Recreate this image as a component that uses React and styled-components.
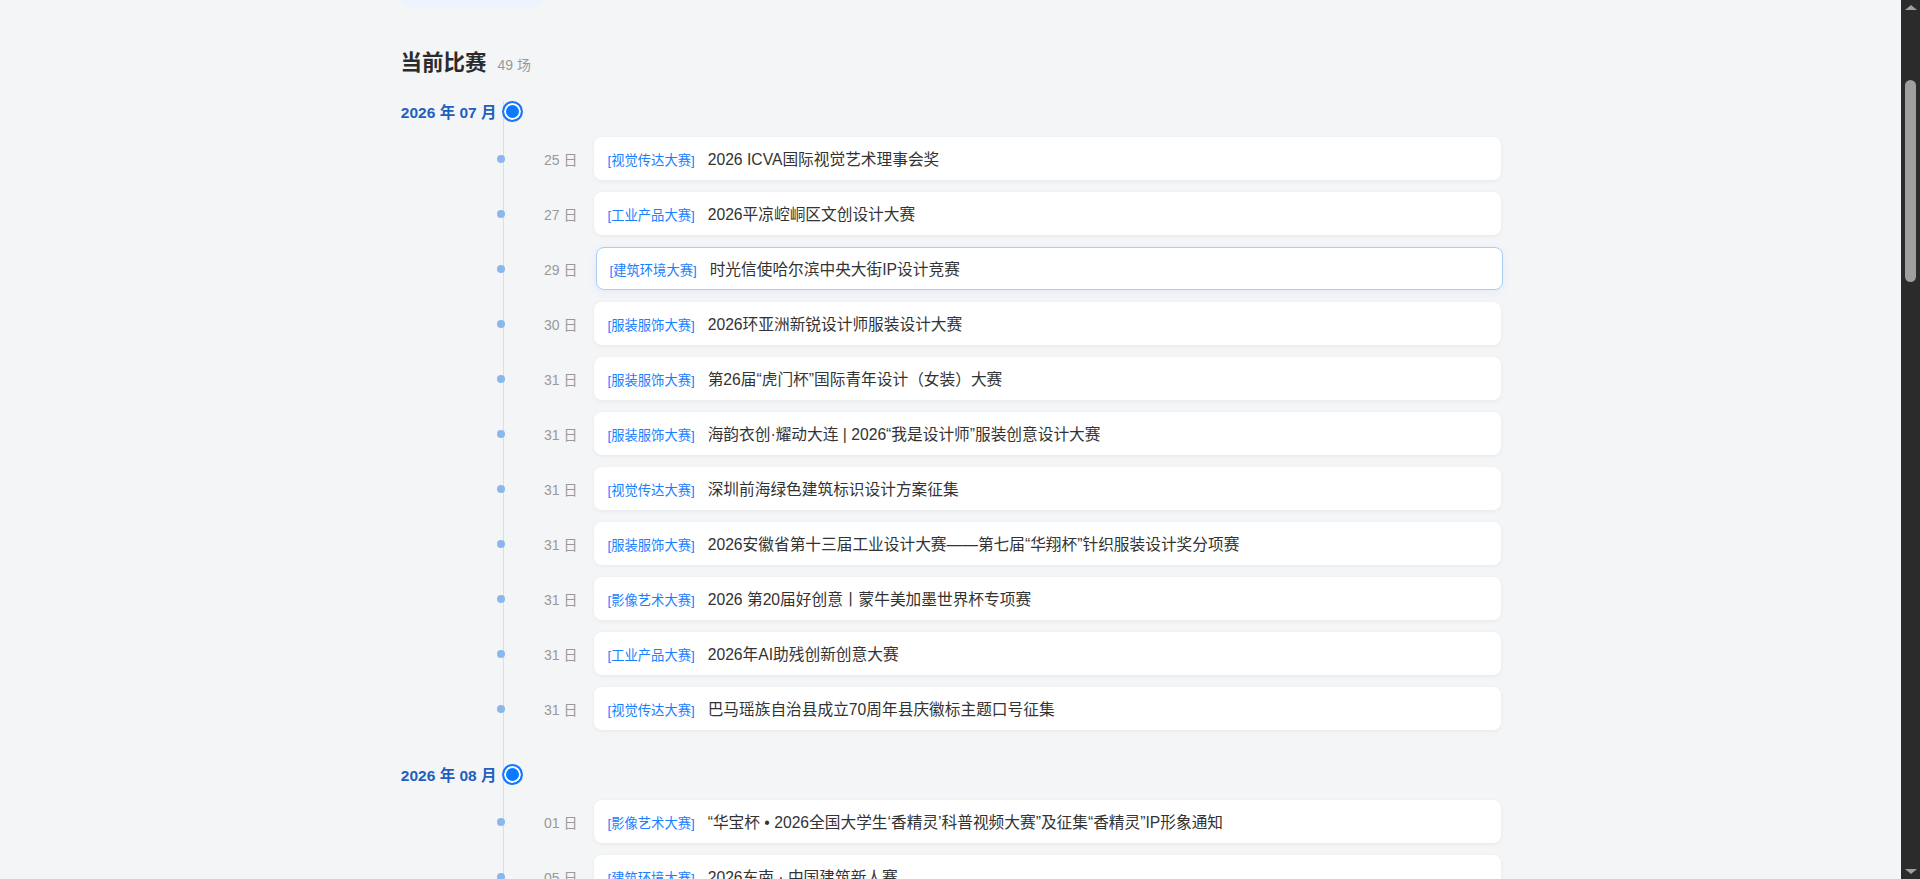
import React, { useEffect, useRef } from 'react'
import styled, { createGlobalStyle } from 'styled-components'

const months = [
   {
      label: '2026 年 07 月',
      items: [
         { day: '25', tag: '视觉传达大赛', title: '2026 ICVA国际视觉艺术理事会奖' },
         { day: '27', tag: '工业产品大赛', title: '2026平凉崆峒区文创设计大赛' },
         { day: '29', tag: '建筑环境大赛', title: '时光信使哈尔滨中央大街IP设计竞赛', active: true },
         { day: '30', tag: '服装服饰大赛', title: '2026环亚洲新锐设计师服装设计大赛' },
         { day: '31', tag: '服装服饰大赛', title: '第26届“虎门杯”国际青年设计（女装）大赛' },
         { day: '31', tag: '服装服饰大赛', title: '海韵衣创·耀动大连 | 2026“我是设计师”服装创意设计大赛' },
         { day: '31', tag: '视觉传达大赛', title: '深圳前海绿色建筑标识设计方案征集' },
         { day: '31', tag: '服装服饰大赛', title: '2026安徽省第十三届工业设计大赛——第七届“华翔杯”针织服装设计奖分项赛' },
         { day: '31', tag: '影像艺术大赛', title: '2026 第20届好创意丨蒙牛美加墨世界杯专项赛' },
         { day: '31', tag: '工业产品大赛', title: '2026年AI助残创新创意大赛' },
         { day: '31', tag: '视觉传达大赛', title: '巴马瑶族自治县成立70周年县庆徽标主题口号征集' },
      ],
   },
   {
      label: '2026 年 08 月',
      items: [
         { day: '01', tag: '影像艺术大赛', title: '“华宝杯 • 2026全国大学生‘香精灵’科普视频大赛”及征集“香精灵”IP形象通知' },
         { day: '05', tag: '建筑环境大赛', title: '2026东南 · 中国建筑新人赛' },
      ],
   },
]

function App() {
   const viewRef = useRef(null)
   useEffect(() => {
      if (viewRef.current) viewRef.current.scrollTop = 232
   }, [])
   return (
      <>
         <GlobalStyle />
         <Shell>
            <Viewport ref={viewRef}>
               <Container>
                  <Hero>
                     <FilterPill />
                  </Hero>
                  <Section>
                     <SectionHead>
                        <SectionTitle>当前比赛</SectionTitle>
                        <SectionCount>49 场</SectionCount>
                     </SectionHead>
                     <Timeline>
                        {months.map((m) => (
                           <MonthGroup key={m.label}>
                              <MonthHead>
                                 <MonthLabel>{m.label}</MonthLabel>
                                 <MonthNode />
                              </MonthHead>
                              <ItemList>
                                 {m.items.map((it, i) => (
                                    <ItemRow key={i}>
                                       <span />
                                       <Dot />
                                       <Day>{it.day} 日</Day>
                                       <Card $active={it.active}>
                                          <CardInner>
                                             <Tag>[{it.tag}]</Tag>
                                             <CardTitle>{it.title}</CardTitle>
                                          </CardInner>
                                       </Card>
                                    </ItemRow>
                                 ))}
                              </ItemList>
                           </MonthGroup>
                        ))}
                     </Timeline>
                  </Section>
               </Container>
            </Viewport>
            <ScrollRail>
               <RailButton>
                  <svg width="12" height="5" viewBox="0 0 12 5">
                     <polygon points="0,5 6,0 12,5" fill="#9f9f9f" />
                  </svg>
               </RailButton>
               <RailTrack>
                  <RailThumb />
               </RailTrack>
               <RailButton $down>
                  <svg width="12" height="5" viewBox="0 0 12 5">
                     <polygon points="0,0 12,0 6,5" fill="#9f9f9f" />
                  </svg>
               </RailButton>
            </ScrollRail>
         </Shell>
      </>
   )
}

export default App

const GlobalStyle = createGlobalStyle`
   html, body {
      margin: 0;
      padding: 0;
      background: #f4f5f7;
      overflow: hidden;
   }
   body {
      font-family: 'Liberation Sans', 'Noto Sans CJK SC', sans-serif;
      color: #333;
   }
`

const Shell = styled.div`
   display: flex;
   height: 100vh;
`

const Viewport = styled.main`
   flex: 1;
   overflow-y: auto;
   scrollbar-width: none;
   &::-webkit-scrollbar {
      display: none;
   }
`

const ScrollRail = styled.div`
   width: 19px;
   flex-shrink: 0;
   display: flex;
   flex-direction: column;
   background: #2b2b2b;
`

const RailButton = styled.div`
   height: 17px;
   display: flex;
   justify-content: center;
   align-items: ${(p) => (p.$down ? 'flex-end' : 'flex-start')};
   padding: ${(p) => (p.$down ? '0 0 5px' : '5px 0 0')};
   box-sizing: border-box;
`

const RailTrack = styled.div`
   flex: 1;
   padding: 63px 4px 0;
`

const RailThumb = styled.div`
   height: 202px;
   border-radius: 6px;
   background: #9f9f9f;
`

const Container = styled.div`
   width: 1100px;
   margin: 0 auto;
   padding-bottom: 2400px;
`

const Hero = styled.div`
   height: 239px;
   display: flex;
   align-items: flex-end;
`

const FilterPill = styled.div`
   width: 145px;
   height: 44px;
   margin-left: -2px;
   background: #edf4fe;
   border-radius: 12px;
`

const Section = styled.section`
   padding-top: 42px;
`

const SectionHead = styled.div`
   display: flex;
   align-items: baseline;
   gap: 11px;
   height: 28px;
   line-height: 28px;
   margin-bottom: 24px;
`

const SectionTitle = styled.h2`
   margin: 0;
   font-size: 21.5px;
   font-weight: 700;
   color: #2b2b2b;
`

const SectionCount = styled.span`
   font-size: 14px;
   color: #999;
`

const Timeline = styled.div`
   display: flex;
   flex-direction: column;
   gap: 34px;
   background: linear-gradient(#cfe0f6, #cfe0f6) no-repeat 102px 0 / 1px 100%;
`

const MonthGroup = styled.div`
   display: flex;
   flex-direction: column;
   gap: 15px;
`

const MonthHead = styled.div`
   display: grid;
   grid-template-columns: 96px 21px;
   column-gap: 5px;
   align-items: center;
   height: 21px;
`

const MonthLabel = styled.div`
   display: flex;
   justify-content: flex-end;
   font-size: 15.5px;
   font-weight: 700;
   color: #1f5fbf;
   white-space: nowrap;
   margin-top: -1px;
`

const MonthNode = styled.div`
   box-sizing: border-box;
   width: 21px;
   height: 21px;
   border-radius: 50%;
   border: 2px solid #1677ff;
   background: #0a7aff;
   box-shadow: inset 0 0 0 2px #fff;
`

const ItemList = styled.div`
   display: flex;
   flex-direction: column;
   gap: 12px;
`

const ItemRow = styled.div`
   display: grid;
   grid-template-columns: 96px 8px 89px 1fr;
   align-items: center;
`

const Dot = styled.div`
   width: 8px;
   height: 8px;
   border-radius: 50%;
   background: #8ab7ee;
`

const Day = styled.div`
   text-align: right;
   padding-right: 16px;
   font-size: 14px;
   color: #999;
   white-space: nowrap;
`

const Card = styled.div`
   box-sizing: border-box;
   height: 43px;
   display: flex;
   align-items: center;
   padding: 0 13px;
   background: #fff;
   border-radius: 8px;
   border: 1px solid ${(p) => (p.$active ? '#a9cdf5' : 'transparent')};
   box-shadow: ${(p) =>
      p.$active ? '0 2px 8px rgba(22, 119, 255, 0.08)' : '0 1px 4px rgba(0, 0, 0, 0.06)'};
   transform: ${(p) => (p.$active ? 'translateX(2px)' : 'none')};
`

const CardInner = styled.div`
   display: flex;
   align-items: baseline;
   gap: 13px;
   white-space: nowrap;
`

const Tag = styled.span`
   font-size: 13.3px;
   color: #1a80ff;
`

const CardTitle = styled.span`
   font-size: 15.7px;
   color: #333;
`
